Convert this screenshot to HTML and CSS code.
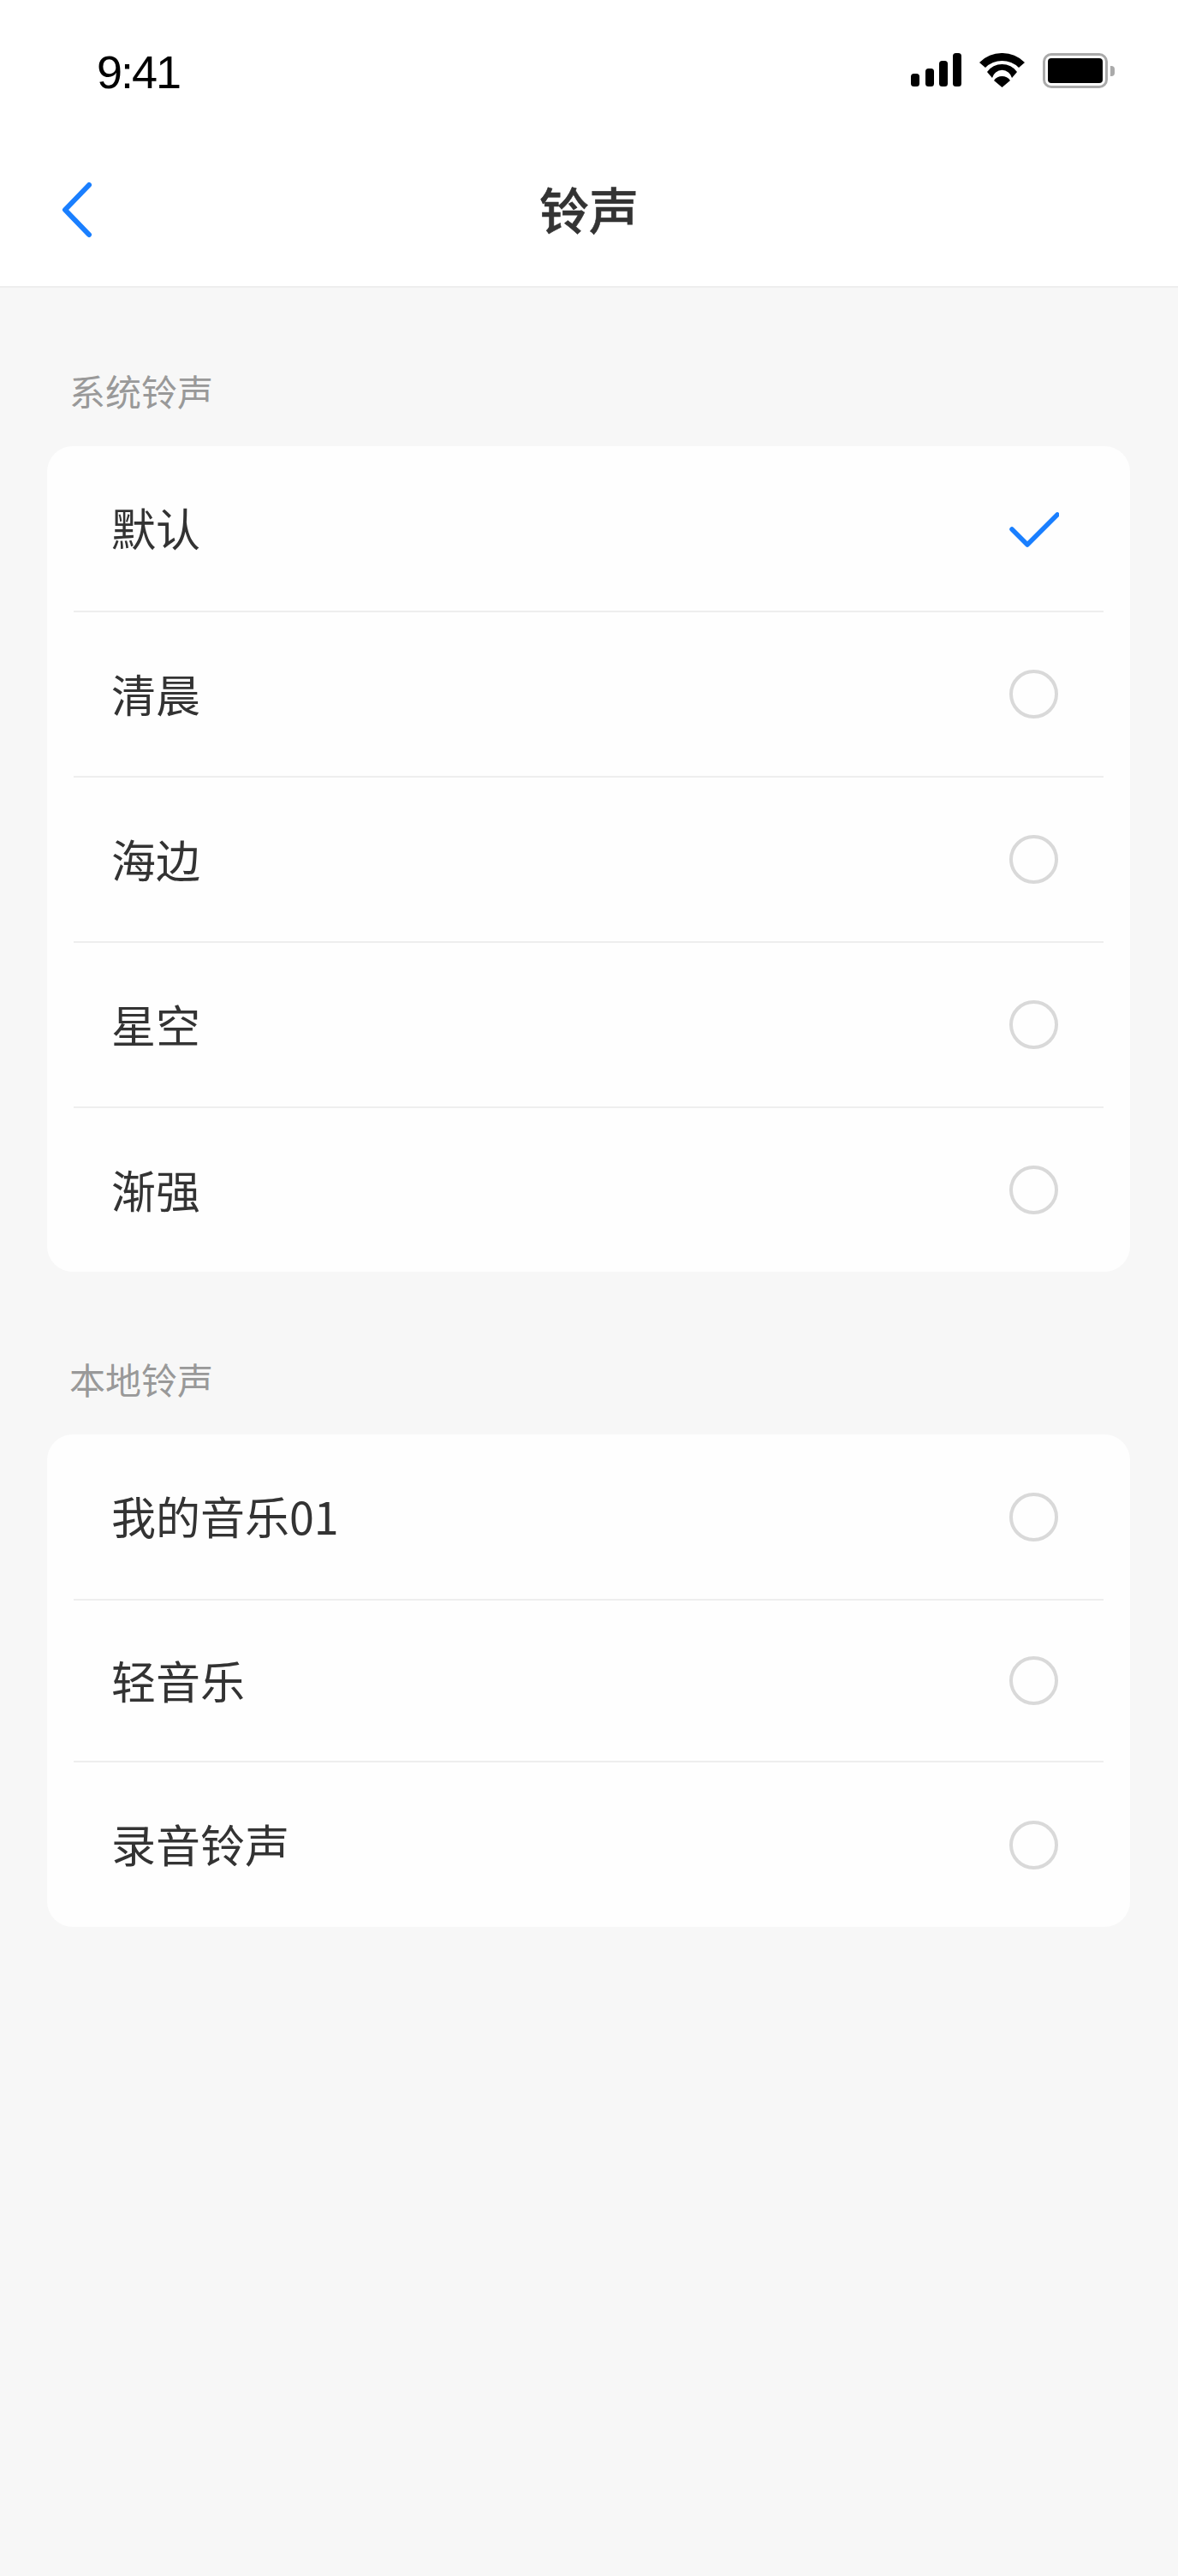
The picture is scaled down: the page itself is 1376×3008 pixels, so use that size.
FILE: index.html
```html
<!DOCTYPE html>
<html lang="zh-CN">
<head>
    <meta charset="UTF-8">
    <meta name="viewport" content="width=device-width, initial-scale=1.0">
    <title>铃声</title>
    <link rel="stylesheet" href="styles.css">
</head>
<body>
    <header class="top">
        <div class="status">
            <span class="time">9:41</span>
            <div class="status-icons">
                <svg class="signal" width="60" height="40" viewBox="0 0 60 40">
                    <rect x="0" y="24" width="10" height="15" rx="3.5"/>
                    <rect x="17" y="18" width="10" height="21" rx="3.5"/>
                    <rect x="33" y="9" width="10" height="30" rx="3.5"/>
                    <rect x="49" y="0" width="10" height="39" rx="3.5"/>
                </svg>
                <svg class="wifi" width="54" height="40" viewBox="0 0 54 40">
                    <path d="M0 11 A37.4 37.4 0 0 1 53 11 L46 17 A27.7 27.7 0 0 0 7 17 Z"/>
                    <path d="M9 22 A21.5 21.5 0 0 1 44 22 L38 29 A11.8 11.8 0 0 0 15 29 Z"/>
                    <path d="M17 32 A11.5 11.5 0 0 1 36 32 L26.500 40 Z"/>
                </svg>
                <div class="battery">
                    <div class="battery-body"><div class="battery-level"></div></div>
                    <div class="battery-nub"></div>
                </div>
            </div>
        </div>
        <nav class="navbar">
            <a class="back" href="#">
                <svg width="36" height="66" viewBox="0 0 36 66">
                    <path d="M32 4 L4 33 L32 62" fill="none" stroke="#1a7fff" stroke-width="6" stroke-linecap="round" stroke-linejoin="round"/>
                </svg>
            </a>
            <h1 class="title">铃声</h1>
        </nav>
    </header>

    <main>
        <section class="group">
            <h2 class="group-label">系统铃声</h2>
            <ul class="card">
                <li class="row">
                    <span class="row-name">默认</span>
                    <svg class="check" width="58" height="44" viewBox="0 0 58 44">
                        <path d="M3 21 L21 39 L56 4" fill="none" stroke="#1a7fff" stroke-width="5.500" stroke-linecap="round" stroke-linejoin="round"/>
                    </svg>
                </li>
                <li class="row"><span class="row-name">清晨</span><span class="radio"></span></li>
                <li class="row"><span class="row-name">海边</span><span class="radio"></span></li>
                <li class="row"><span class="row-name">星空</span><span class="radio"></span></li>
                <li class="row"><span class="row-name">渐强</span><span class="radio"></span></li>
            </ul>
        </section>

        <section class="group">
            <h2 class="group-label">本地铃声</h2>
            <ul class="card card-local">
                <li class="row"><span class="row-name">我的音乐01</span><span class="radio"></span></li>
                <li class="row"><span class="row-name">轻音乐</span><span class="radio"></span></li>
                <li class="row"><span class="row-name">录音铃声</span><span class="radio"></span></li>
            </ul>
        </section>
    </main>
</body>
</html>
```

FILE: styles.css
```css
body {
    margin: 0;
    padding: 0;
    min-height: 3008px;
    background-color: #f7f7f7;
    font-family: "Noto Sans CJK SC", "Noto Sans", sans-serif;
    color: #333;
}

.top {
    background-color: #fff;
    border-bottom: 2px solid #eeeeee;
    box-sizing: border-box;
    height: 336px;
}

.status {
    height: 170px;
    display: flex;
    justify-content: space-between;
    padding: 62px 74px 0 113px;
    box-sizing: border-box;
}

.time {
    font-family: "Liberation Sans", Arial, sans-serif;
    font-size: 54px;
    line-height: 44px;
    letter-spacing: -2px;
    color: #000;
}

.status-icons {
    display: flex;
    align-items: flex-start;
    gap: 20px;
    height: 42px;
}

.signal,
.wifi {
    fill: #000;
}

.battery {
    display: flex;
    align-items: center;
    gap: 3px;
    height: 41px;
}

.battery-body {
    width: 76px;
    height: 41px;
    box-sizing: border-box;
    border: 3px solid #aaa;
    border-radius: 10px;
    padding: 3px;
}

.battery-level {
    height: 100%;
    background-color: #000;
    border-radius: 4px;
}

.battery-nub {
    width: 5px;
    height: 12px;
    background-color: #aaa;
    border-radius: 0 4px 4px 0;
}

.navbar {
    display: flex;
    align-items: center;
    justify-content: center;
    position: relative;
    height: 146px;
}

.back {
    position: absolute;
    left: 72px;
    top: 42px;
    line-height: 0;
}

.title {
    margin: 0;
    font-size: 58px;
    font-weight: 500;
    line-height: 1;
    -webkit-text-stroke: 0.6px #333;
    color: #333;
}

main {
    padding: 89px 56px 0 55px;
}

.group + .group {
    margin-top: 94px;
}

.group-label {
    margin: 0 0 34px 26px;
    font-size: 42px;
    font-weight: 400;
    line-height: 62px;
    color: #999;
}

.card {
    list-style: none;
    margin: 0;
    padding: 0 31px;
    background-color: #fefefe;
    border-radius: 30px;
}

.row {
    display: flex;
    align-items: center;
    justify-content: space-between;
    box-sizing: border-box;
    height: 193px;
    padding: 0 52px 0 44px;
    border-top: 2px solid #eeeeee;
}

.row:first-child {
    border-top: none;
    height: 192px;
}

.card-local .row:nth-child(2) {
    height: 189px;
}

.card-local .row:nth-child(3) {
    height: 194px;
}

.row-name {
    font-size: 52px;
    line-height: 1;
    padding-bottom: 2px;
}

.check {
    display: block;
    margin-top: 4px;
}

.radio {
    display: block;
    width: 57px;
    height: 57px;
    margin-right: 1px;
    box-sizing: border-box;
    border: 4px solid #d9d9d9;
    border-radius: 50%;
}
```
